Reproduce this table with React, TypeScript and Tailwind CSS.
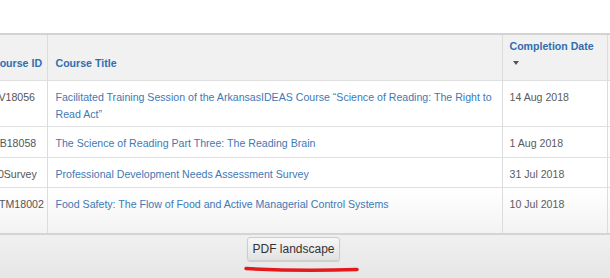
import * as React from "react"

type Row = { id: string; title: string; date: string; h: string }

const ROWS: Row[] = [
  {
    id: "TV18056",
    title: "Facilitated Training Session of the ArkansasIDEAS Course \u201cScience of Reading: The Right to Read Act\u201d",
    date: "14 Aug 2018",
    h: "h-[46px]",
  },
  { id: "RB18058", title: "The Science of Reading Part Three: The Reading Brain", date: "1 Aug 2018", h: "h-[31px]" },
  { id: "20Survey", title: "Professional Development Needs Assessment Survey", date: "31 Jul 2018", h: "h-[30px]" },
  { id: "ETM18002", title: "Food Safety: The Flow of Food and Active Managerial Control Systems", date: "10 Jul 2018", h: "h-[46px]" },
]

export default function App() {
  return (
    <div
      className="relative h-[278px] w-[610px] overflow-hidden bg-white text-[10.6px] leading-[17px]"
      style={{ fontFamily: '"Liberation Sans", Arial, sans-serif' }}
    >
      <div className="h-[33px]" />

      <table className="-ml-[16px] w-[683px] table-fixed border-collapse">
        <colgroup>
          <col className="w-[63px]" />
          <col className="w-[455px]" />
          <col className="w-[105px]" />
          <col className="w-[60px]" />
        </colgroup>
        <thead>
          <tr className="h-[46px] border-t-2 border-[#d2d2d2] bg-[#f1f1f1] align-bottom font-bold text-[#306eb0]">
            <th className="whitespace-nowrap border-r border-[#dcdcdc] px-2 pb-2 text-left">Course ID</th>
            <th className="border-r border-[#dcdcdc] px-2 pb-2 text-left">Course Title</th>
            <th className="border-r border-[#dcdcdc] px-[7px] pb-2 text-left">
              Completion Date
              <div className="flex h-[17px] items-center pl-[3px]">
                <span className="h-0 w-0 border-x-[3.5px] border-t-[4px] border-x-transparent border-t-[#555]" />
              </div>
            </th>
            <th />
          </tr>
        </thead>
        <tbody>
          {ROWS.map((r, i) => (
            <tr
              key={r.id}
              className={`${r.h} border-t border-[#e0e0e0] align-top ${
                i === ROWS.length - 1 ? "bg-gradient-to-b from-white to-[#f3f3f3]" : "bg-white"
              }`}
            >
              <td className="whitespace-nowrap border-r border-[#dcdcdc] px-2 pt-2 text-[#555]">{r.id}</td>
              <td className="border-r border-[#dcdcdc] pl-2 pr-[4px] pt-2 text-[#4079b5]">{r.title}</td>
              <td className="border-r border-[#dcdcdc] px-[7px] pt-2 text-[#5c5c5c]">{r.date}</td>
              <td />
            </tr>
          ))}
        </tbody>
      </table>

      <div className="h-[46px] border-t-2 border-[#d4d4d4] bg-gradient-to-b from-[#f0f0f0] to-[#e6e6e6] pl-[247px] pt-[2px]">
        <button className="h-[24px] w-[93px] rounded-[3px] border border-[#cdcdcd] bg-gradient-to-b from-[#f7f7f7] to-[#e2e2e2] text-[12px] text-[#333] shadow-[0_1px_1px_rgba(0,0,0,0.12)]">
          PDF landscape
        </button>
      </div>

      {/* hand-drawn annotation */}
      <svg className="absolute left-[243px] top-[264px]" width="118" height="10" viewBox="0 0 118 10">
        <path d="M3 4.5 C 30 6, 80 6.5, 114 5.5" stroke="#e3191b" strokeWidth="3.5" strokeLinecap="round" fill="none" />
      </svg>
    </div>
  )
}
